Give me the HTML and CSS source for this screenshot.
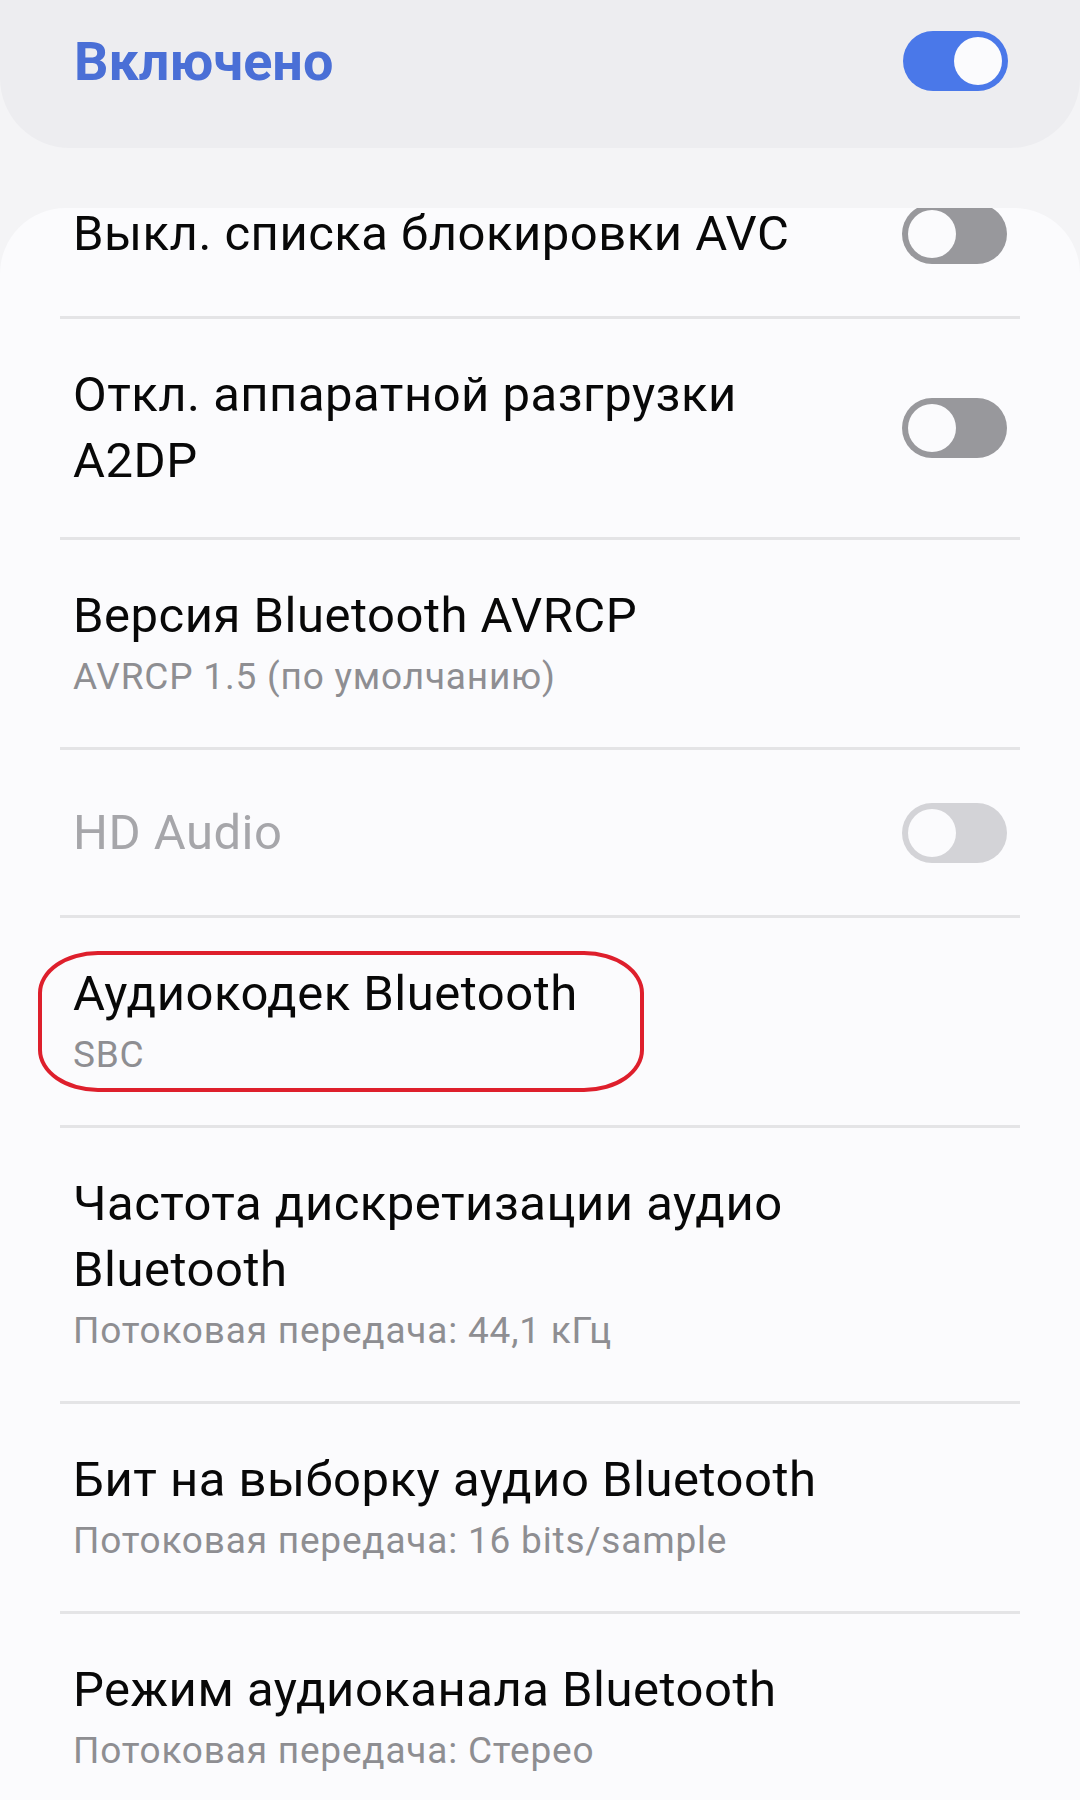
FILE: index.html
```html
<!DOCTYPE html>

<html>
<head>
    <meta charset="utf-8">
    <title>Параметры разработчика</title>
    <link rel="stylesheet" href="styles.css">
</head>
<body>

    <div class="master-card">
        <span class="master-title">Включено</span>
        <div class="switch on"></div>
    </div>

    <div class="list-card">
        <div class="list">
            <div class="row">
                <div class="text">
                    <div class="title">Выкл. списка блокировки AVC</div>
                </div>
                <div class="switch"></div>
            </div>

            <div class="row">
                <div class="text">
                    <div class="title">Откл. аппаратной разгрузки<br>A2DP</div>
                </div>
                <div class="switch"></div>
            </div>

            <div class="row">
                <div class="text">
                    <div class="title">Версия Bluetooth AVRCP</div>
                    <div class="sub">AVRCP 1.5 (по умолчанию)</div>
                </div>
            </div>

            <div class="row disabled">
                <div class="text">
                    <div class="title">HD Audio</div>
                </div>
                <div class="switch"></div>
            </div>

            <div class="row marked">
                <div class="text">
                    <div class="title">Аудиокодек Bluetooth</div>
                    <div class="sub">SBC</div>
                </div>
                <div class="mark"></div>
            </div>

            <div class="row">
                <div class="text">
                    <div class="title">Частота дискретизации аудио<br>Bluetooth</div>
                    <div class="sub">Потоковая передача: 44,1 кГц</div>
                </div>
            </div>

            <div class="row">
                <div class="text">
                    <div class="title">Бит на выборку аудио Bluetooth</div>
                    <div class="sub">Потоковая передача: 16 bits/sample</div>
                </div>
            </div>

            <div class="row">
                <div class="text">
                    <div class="title">Режим аудиоканала Bluetooth</div>
                    <div class="sub">Потоковая передача: Стерео</div>
                </div>
            </div>
        </div>
    </div>

</body>
</html>
```

FILE: styles.css
```css
body {
    margin: 0;
    height: 1800px;
    overflow: hidden;
    background: #f4f4f6;
    font-family: Roboto, "Noto Sans", sans-serif;
    color: #080808;
}

/* top "on" card */
.master-card {
    height: 148px;
    box-sizing: border-box;
    padding: 0 72px 26px 74px;
    display: flex;
    align-items: center;
    justify-content: space-between;
    background: #ededf0;
    border-radius: 0 0 70px 70px;
}

.master-title {
    font-size: 54px;
    font-weight: bold;
    color: #4a6fd6;
}

/* settings list */
.list-card {
    margin-top: 60px;
    height: 1592px;
    overflow: hidden;
    background: #fbfbfd;
    border-radius: 66px 66px 0 0;
}

.list {
    margin-top: -57px;
    padding: 0 60px;
}

.row {
    position: relative;
    min-height: 168px;
    box-sizing: border-box;
    padding: 43px 13px;
    display: flex;
    align-items: center;
    justify-content: space-between;
    border-bottom: 3px solid #e4e4e6;
}

.title {
    font-size: 49px;
    line-height: 66px;
    letter-spacing: 0.5px;
}

.sub {
    font-size: 37px;
    line-height: 55px;
    letter-spacing: 0.8px;
    color: #8e8e92;
}

.disabled .title {
    color: #a6a6aa;
}

/* toggle */
.switch {
    flex: none;
    width: 105px;
    height: 60px;
    box-sizing: border-box;
    padding: 6px;
    display: flex;
    border-radius: 30px;
    background: #98989c;
}

.switch::after {
    content: '';
    width: 48px;
    height: 48px;
    border-radius: 50%;
    background: #fbfbfd;
}

.switch.on {
    justify-content: flex-end;
    background: #4a78e9;
}

.disabled .switch {
    background: #d3d3d7;
}

/* red outline drawn over the codec row */
.mark {
    position: absolute;
    left: -22px;
    top: 33px;
    width: 606px;
    height: 141px;
    box-sizing: border-box;
    border: 4px solid #de1f2c;
    border-radius: 60px / 42px;
}
```
